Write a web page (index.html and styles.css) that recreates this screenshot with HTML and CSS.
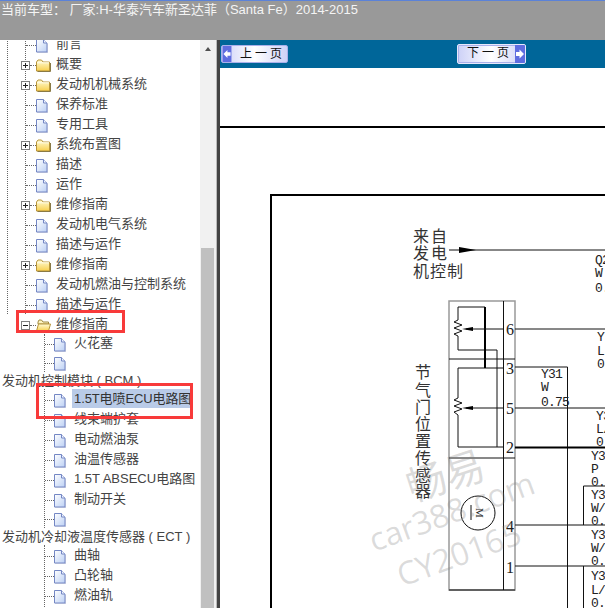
FILE: index.html
```html
<!DOCTYPE html>
<html lang="zh">
<head>
    <meta charset="UTF-8">
    <title>当前车型</title>
    <link rel="stylesheet" href="styles.css">
</head>
<body>
    <svg class="sprite" aria-hidden="true">
        <defs>
            <linearGradient id="fileFill" x1="0" y1="0" x2="1" y2="1">
                <stop offset="0" stop-color="#ffffff"/>
                <stop offset="1" stop-color="#bcd0f4"/>
            </linearGradient>
            <linearGradient id="folderFill" x1="0" y1="0" x2="0" y2="1">
                <stop offset="0" stop-color="#fffbd8"/>
                <stop offset="1" stop-color="#f8d04e"/>
            </linearGradient>
        </defs>
        <symbol id="file" viewBox="0 0 12 14">
            <path d="M.5 .5H7.500L11 4V13H.5Z" fill="url(#fileFill)" stroke="#7487c4"/>
            <path d="M7.500 .5V4H11" fill="#eef3fd" stroke="#7487c4"/>
            <path d="M1 13.500H11.500V5" fill="none" stroke="#aab4d6"/>
        </symbol>
        <symbol id="folder" viewBox="0 0 15 13">
            <path d="M.5 3V12H13.500V3H7L5.500 1H2Z" fill="url(#folderFill)" stroke="#b8953a"/>
            <path d="M1 3.800H13" stroke="#fffde8"/>
            <path d="M1.500 12.500H14.500V4" fill="none" stroke="#8a7a45"/>
        </symbol>
        <symbol id="folderOpen" viewBox="0 0 15 13">
            <path d="M2 3V5H12.500V3H7L5.500 1H3Z" fill="#fdf3c0" stroke="#a08a40"/>
            <path d="M.5 12L2.500 5H14.500L12.500 12Z" fill="url(#folderFill)" stroke="#b8953a"/>
        </symbol>
    </svg>

    <header class="topbar">当前车型：&nbsp;厂家:H-华泰汽车新圣达菲（Santa Fe）2014-2015</header>

    <div class="layout">
        <aside class="sidebar">
            <div class="tree">
                <div class="guide guide-outer">
                    <ul class="guide guide-inner">
                        <li class="row"><span class="stub"></span><svg class="icon"><use href="#file"/></svg><span class="label">前言</span></li>
                        <li class="row"><span class="toggle plus"></span><span class="stub short"></span><svg class="icon folder"><use href="#folder"/></svg><span class="label">概要</span></li>
                        <li class="row"><span class="toggle plus"></span><span class="stub short"></span><svg class="icon folder"><use href="#folder"/></svg><span class="label">发动机机械系统</span></li>
                        <li class="row"><span class="stub"></span><svg class="icon"><use href="#file"/></svg><span class="label">保养标准</span></li>
                        <li class="row"><span class="stub"></span><svg class="icon"><use href="#file"/></svg><span class="label">专用工具</span></li>
                        <li class="row"><span class="toggle plus"></span><span class="stub short"></span><svg class="icon folder"><use href="#folder"/></svg><span class="label">系统布置图</span></li>
                        <li class="row"><span class="stub"></span><svg class="icon"><use href="#file"/></svg><span class="label">描述</span></li>
                        <li class="row"><span class="stub"></span><svg class="icon"><use href="#file"/></svg><span class="label">运作</span></li>
                        <li class="row"><span class="toggle plus"></span><span class="stub short"></span><svg class="icon folder"><use href="#folder"/></svg><span class="label">维修指南</span></li>
                        <li class="row"><span class="stub"></span><svg class="icon"><use href="#file"/></svg><span class="label">发动机电气系统</span></li>
                        <li class="row"><span class="stub"></span><svg class="icon"><use href="#file"/></svg><span class="label">描述与运作</span></li>
                        <li class="row"><span class="toggle plus"></span><span class="stub short"></span><svg class="icon folder"><use href="#folder"/></svg><span class="label">维修指南</span></li>
                        <li class="row"><span class="stub"></span><svg class="icon"><use href="#file"/></svg><span class="label">发动机燃油与控制系统</span></li>
                        <li class="row"><span class="stub"></span><svg class="icon"><use href="#file"/></svg><span class="label">描述与运作</span></li>
                    </ul>
                </div>
                <div class="row open-row"><span class="toggle"></span><span class="stub short"></span><svg class="icon folder"><use href="#folderOpen"/></svg><span class="label">维修指南</span></div>

                <ul class="guide guide-leaf">
                    <li class="row tight"><span class="stub"></span><svg class="icon"><use href="#file"/></svg><span class="label">火花塞</span></li>
                    <li class="row tight"><span class="stub"></span><svg class="icon"><use href="#file"/></svg></li>
                </ul>
                <div class="heading">发动机控制模块 ( BCM )</div>
                <ul class="guide guide-leaf">
                    <li class="row"><span class="stub"></span><svg class="icon"><use href="#file"/></svg><span class="label selected">1.5T电喷ECU电路图</span></li>
                    <li class="row"><span class="stub"></span><svg class="icon"><use href="#file"/></svg><span class="label">线束端护套</span></li>
                    <li class="row"><span class="stub"></span><svg class="icon"><use href="#file"/></svg><span class="label">电动燃油泵</span></li>
                    <li class="row"><span class="stub"></span><svg class="icon"><use href="#file"/></svg><span class="label">油温传感器</span></li>
                    <li class="row"><span class="stub"></span><svg class="icon"><use href="#file"/></svg><span class="label">1.5T ABSECU电路图</span></li>
                    <li class="row"><span class="stub"></span><svg class="icon"><use href="#file"/></svg><span class="label">制动开关</span></li>
                    <li class="row tight"><span class="stub"></span><svg class="icon"><use href="#file"/></svg></li>
                </ul>
                <div class="heading">发动机冷却液温度传感器 ( ECT )</div>
                <ul class="guide guide-leaf">
                    <li class="row"><span class="stub"></span><svg class="icon"><use href="#file"/></svg><span class="label">曲轴</span></li>
                    <li class="row"><span class="stub"></span><svg class="icon"><use href="#file"/></svg><span class="label">凸轮轴</span></li>
                    <li class="row"><span class="stub"></span><svg class="icon"><use href="#file"/></svg><span class="label">燃油轨</span></li>
                    <li class="row"><span class="stub"></span><svg class="icon"><use href="#file"/></svg><span class="label">燃油喷射器</span></li>
                </ul>
            </div>
            <div class="scrollbar">
                <span class="scroll-up"></span>
                <span class="scroll-thumb"></span>
            </div>
            <div class="mark mark-folder"></div>
            <div class="mark mark-item"></div>
        </aside>

        <main class="content">
            <nav class="pager">
                <a class="page-btn prev">
                    <svg class="arrow" viewBox="0 0 10 18"><rect width="10" height="18" fill="#5f6de0"/><path d="M1 9L5.500 4.500V7H9V11H5.500V13.500Z" fill="#fff"/></svg>
                    <span class="page-text">上一页</span>
                </a>
                <a class="page-btn next">
                    <span class="page-text">下一页</span>
                    <svg class="arrow" viewBox="0 0 10 18"><rect width="10" height="18" fill="#5f6de0"/><path d="M9 9L4.500 4.500V7H1V11H4.500V13.500Z" fill="#fff"/></svg>
                </a>
            </nav>

            <svg class="diagram" viewBox="220 68 385 540">
                <!-- 页面框线 -->
                <path class="heavy" d="M220 127H605"/>
                <path class="heavy" d="M605 195H271V608"/>

                <!-- 来自发电机控制 -->
                <text class="cjk" x="413" y="242">来自</text>
                <text class="cjk" x="413" y="259">发电</text>
                <text class="cjk tight-cjk" x="413" y="277">机控制</text>
                <path class="wire" d="M449 250H605"/>
                <path class="solid" d="M459 247L476 250L459 253Z"/>

                <!-- 传感器外框 -->
                <path class="frame" d="M449 301H515V590H449Z"/>
                <path class="wire" d="M449 359H515M449 458H515M449 590H515M503.500 301V590"/>

                <!-- 电阻 -->
                <path class="wire" d="M458 320V307H485M458 336V350H497V447M458 398V368H503M458 415V447H503"/>
                <path class="thick" d="M485 307V368"/>
                <path class="wire" d="M458 320L454 322L462 325L454 328L462 331L454 334L458 336"/>
                <path class="wire" d="M458 398L454 400L462 403L454 406L462 409L454 412L458 415"/>
                <path class="wire" d="M466 329H503M466 408H503"/>
                <path class="solid" d="M462 329L473 327V331Z"/>
                <path class="solid" d="M462 408L473 406V410Z"/>

                <!-- 电机 -->
                <circle class="wire" cx="478" cy="513" r="17"/>
                <path class="wire" d="M471 505V520"/>
                <text class="motor" transform="translate(476 513) rotate(90)" text-anchor="middle">M</text>

                <!-- 引脚 -->
                <text class="pin" x="506" y="335">6</text>
                <text class="pin" x="506" y="374">3</text>
                <text class="pin" x="506" y="414">5</text>
                <text class="pin" x="506" y="453">2</text>
                <text class="pin" x="506" y="532">4</text>
                <text class="pin" x="506" y="573">1</text>

                <path class="wire" d="M515 329H605M515 367H567.500V608M515 408H605M515 525H605M515 566H605M583.500 486H605M583.500 486V525M583.500 566V608"/>
                <path class="thick" d="M515 447.500H605"/>

                <!-- 节气门位置传感器 -->
                <text class="cjk" x="415" y="378">节</text>
                <text class="cjk" x="415" y="396">气</text>
                <text class="cjk" x="415" y="413">门</text>
                <text class="cjk" x="415" y="430">位</text>
                <text class="cjk" x="415" y="447">置</text>
                <text class="cjk" x="415" y="464">传</text>
                <text class="cjk" x="415" y="481">感</text>
                <text class="cjk" x="415" y="497">器</text>

                <!-- 线号 -->
                <text class="wire-no" x="595" y="264">Q2</text>
                <text class="wire-no" x="595" y="277">W</text>
                <text class="wire-no" x="595" y="292">0.</text>
                <text class="wire-no" x="597" y="341">Y</text>
                <text class="wire-no" x="597" y="355">L</text>
                <text class="wire-no" x="597" y="368">0.</text>
                <text class="wire-no" x="541" y="378">Y31</text>
                <text class="wire-no" x="541" y="391">W</text>
                <text class="wire-no" x="541" y="406">0.75</text>
                <text class="wire-no" x="596" y="420">Y3</text>
                <text class="wire-no" x="596" y="433">L/</text>
                <text class="wire-no" x="596" y="446">0.</text>
                <text class="wire-no" x="591" y="460">Y3</text>
                <text class="wire-no" x="591" y="473">P</text>
                <text class="wire-no" x="591" y="486">0.</text>
                <text class="wire-no" x="591" y="499">Y3</text>
                <text class="wire-no" x="591" y="512">W/</text>
                <text class="wire-no" x="591" y="525">0.</text>
                <text class="wire-no" x="591" y="539">Y3</text>
                <text class="wire-no" x="591" y="552">W/</text>
                <text class="wire-no" x="591" y="565">0.</text>
                <text class="wire-no" x="591" y="580">Y3</text>
                <text class="wire-no" x="591" y="594">L/</text>
                <text class="wire-no" x="591" y="607">0.</text>

                <!-- 水印 -->
                <text class="stamp stamp-cn" transform="translate(412 502) rotate(-18)">畅易</text>
                <text class="stamp" transform="translate(374 552) rotate(-20)">car388.com</text>
                <text class="stamp" transform="translate(402 587) rotate(-20)">CY20165</text>
            </svg>
        </main>
    </div>
</body>
</html>
```

FILE: styles.css
```css
* {
    box-sizing: border-box;
}
html, body {
    margin: 0;
    height: 100%;
    overflow: hidden;
}
body {
    font-family: "Liberation Sans", "Noto Sans CJK SC", sans-serif;
    font-size: 13px;
    background-color: white;
}
ul {
    list-style: none;
    margin: 0;
    padding: 0;
}
.sprite {
    display: block;
    width: 0;
    height: 0;
}

.topbar {
    height: 40px;
    padding: 0 0 0 1px;
    line-height: 17px;
    color: #f4f4f4;
    background-color: #999;
    border-top: 1px solid #5b82d8;
    white-space: nowrap;
}
.layout {
    display: flex;
    height: 568px;
}

/* 左侧目录树 */
.sidebar {
    position: relative;
    display: flex;
    flex: 0 0 217px;
    background-color: white;
}
.tree {
    flex: 1;
    overflow: hidden;
    color: #444;
    white-space: nowrap;
}
.guide {
    border-left: 1px dotted #666;
}
.guide-outer {
    margin: -6px 0 0 7px;
}
.guide-inner {
    margin-left: 17px;
}
.guide-leaf {
    margin-left: 44px;
}
.row {
    display: flex;
    align-items: center;
    height: 20px;
}
.row.tight {
    height: 19px;
}
.open-row {
    margin-left: 26px;
}
.stub {
    flex: none;
    width: 10px;
    border-top: 1px dotted #666;
    margin-top: 2px;
}
.guide-leaf .stub {
    width: 9px;
}
.stub.short {
    width: 6px;
}
.toggle {
    flex: none;
    position: relative;
    width: 9px;
    height: 9px;
    margin: 2px 0 0 -5px;
    border: 1px solid #808080;
    background: linear-gradient(#222, #222) center / 5px 1px no-repeat, #fff;
}
.toggle.plus::after {
    content: "";
    position: absolute;
    left: 3px;
    top: 1px;
    width: 1px;
    height: 5px;
    background-color: #222;
}
.icon {
    flex: none;
    width: 12px;
    height: 14px;
    margin: 3px 8px 0 0;
}
.icon.folder {
    width: 15px;
    height: 13px;
    margin-right: 5px;
}
.label {
    margin-bottom: 2px;
    line-height: 19px;
}
.selected {
    color: #333;
    background-color: #b9cbe8;
    padding: 0 1px 0 2px;
    margin-left: -2px;
    letter-spacing: -0.1px;
}
.heading {
    height: 17px;
    line-height: 17px;
    padding-left: 2px;
}

.scrollbar {
    display: flex;
    flex-direction: column;
    align-items: flex-start;
    flex: 0 0 17px;
    background-color: #f1f1f1;
    border-right: 1px solid #bbb;
}
.scroll-up {
    margin: 7px 0 0 5px;
    border: 3.500px solid transparent;
    border-top: 0;
    border-bottom: 4px solid #505050;
}
.scroll-thumb {
    flex: 1;
    width: 13px;
    margin: 197px 0 0 1px;
    background-color: #c0c0c0;
}

/* 红色标注框 */
.mark {
    position: absolute;
    border: 3px solid #f83a3a;
}
.mark-folder {
    left: 16px;
    top: 270px;
    width: 109px;
    height: 23px;
}
.mark-item {
    left: 36px;
    top: 343px;
    width: 157px;
    height: 36px;
}

/* 右侧内容 */
.content {
    display: flex;
    flex-direction: column;
    flex: 1;
    min-width: 0;
    border-left: 3px solid #444;
}
.pager {
    display: flex;
    flex: 0 0 28px;
    align-items: center;
    padding-left: 1px;
    background-color: #006699;
}
.page-btn {
    display: flex;
    align-items: stretch;
    height: 18px;
    border: 1px solid #aab0ea;
    border-radius: 2px;
    background: linear-gradient(90deg, #cdd1f7, #fff 50%, #cdd1f7);
    color: #111;
    font-size: 12px;
    overflow: hidden;
}
.prev {
    width: 67px;
}
.next {
    width: 69px;
    height: 20px;
    margin-left: 169px;
    border-color: #e6e8fc;
    box-shadow: inset 0 0 0 1px #aab0ea;
}
.arrow {
    flex: none;
    width: 10px;
    height: 100%;
}
.page-text {
    flex: 1;
    padding-left: 6px;
    line-height: 16px;
    letter-spacing: 3px;
    text-align: center;
}
.diagram {
    display: block;
    flex: 1;
    width: 385px;
    height: 540px;
}

.heavy {
    fill: none;
    stroke: #000;
    stroke-width: 2;
}
.wire {
    fill: none;
    stroke: #111;
    stroke-width: 1;
}
.thick {
    fill: none;
    stroke: #000;
    stroke-width: 2;
}
.frame {
    fill: none;
    stroke: #999;
    stroke-width: 1.500;
}
.solid {
    fill: #000;
}
.cjk {
    font-family: "Noto Sans CJK SC", sans-serif;
    font-size: 16px;
    letter-spacing: 2px;
    fill: #333;
}
.tight-cjk {
    letter-spacing: 1px;
}
.pin {
    font-family: "Liberation Serif", serif;
    font-size: 16px;
    fill: #222;
}
.wire-no {
    font-family: "Liberation Mono", monospace;
    font-size: 13px;
    letter-spacing: -0.8px;
    fill: #222;
}
.motor {
    font-family: "Liberation Serif", serif;
    font-size: 11px;
    fill: #222;
}
.stamp {
    font-family: "Open Sans", "Noto Sans CJK SC", sans-serif;
    font-size: 32px;
    fill: rgba(130, 130, 130, 0.28);
}
.stamp-cn {
    font-size: 40px;
}
```
